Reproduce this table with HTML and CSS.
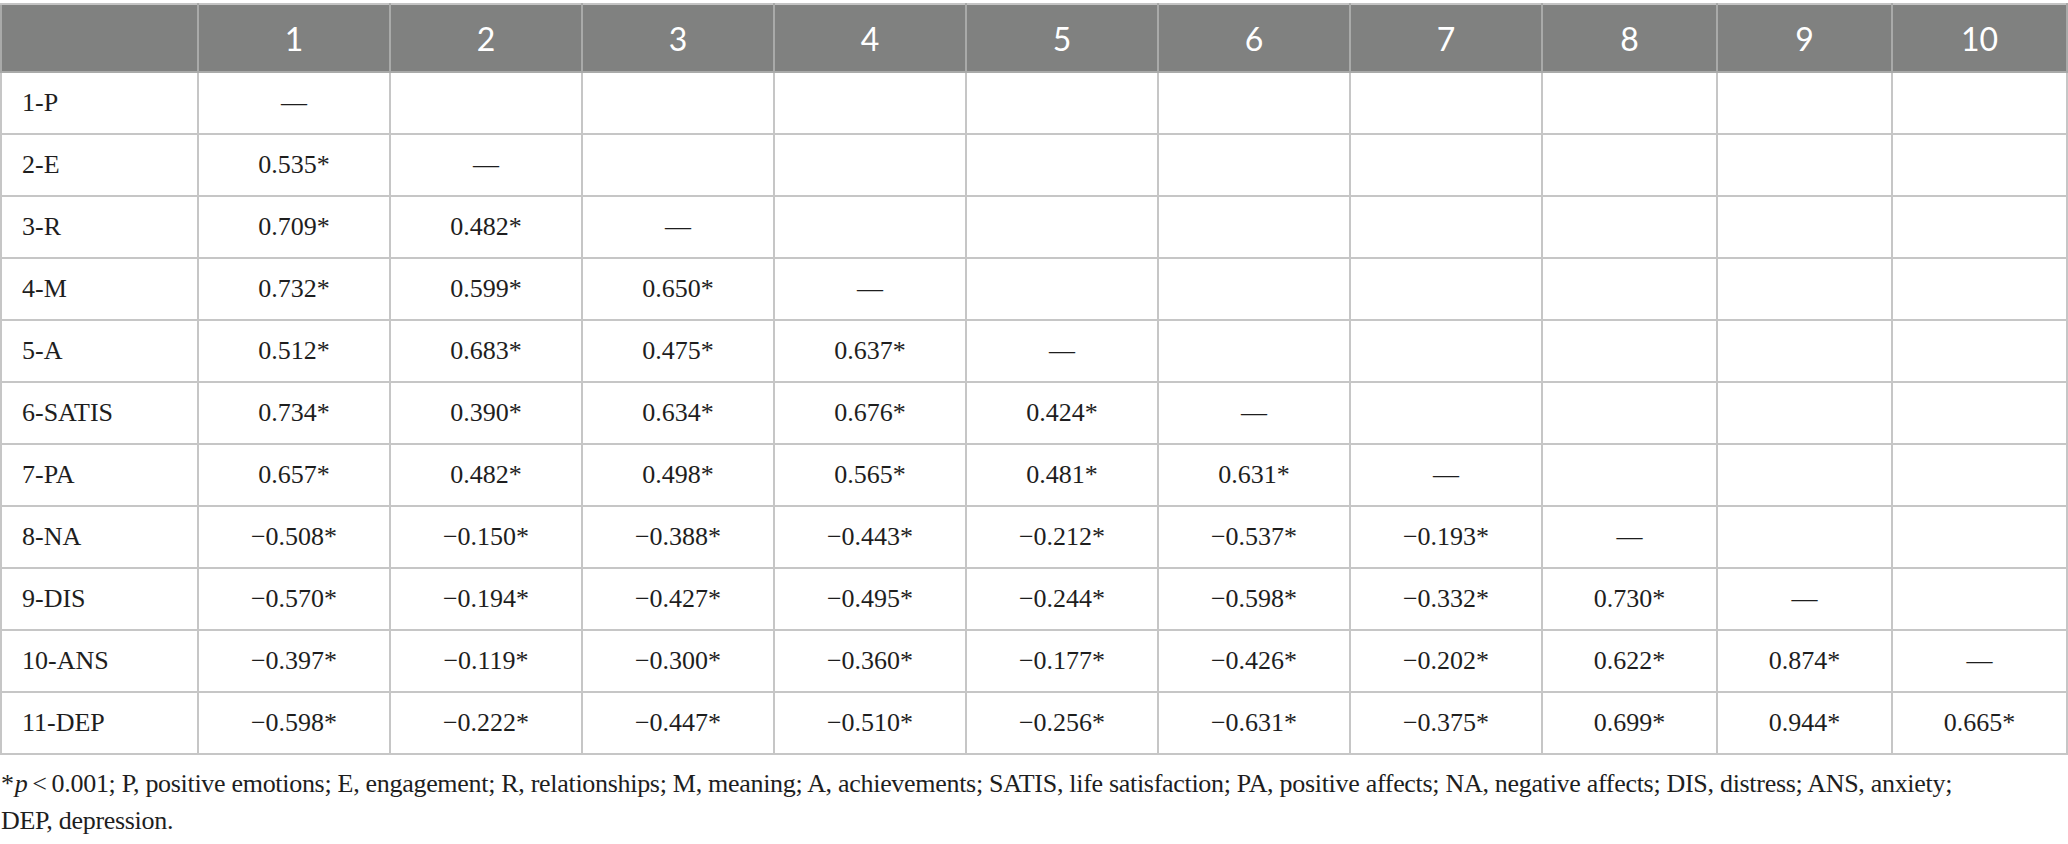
FILE: index.html
```html
<!DOCTYPE html>
<html>
<head>
  <title>Correlations</title>
  <meta name="viewport" content="width=device-width, initial-scale=1.0">
  <link rel="stylesheet" href="styles.css">
</head>
<body>
  <div class="wrap">
    <table class="corr">
      <colgroup>
        <col class="c-label">
        <col class="c-wide"><col class="c-wide"><col class="c-wide"><col class="c-wide">
        <col class="c-wide"><col class="c-wide"><col class="c-wide">
        <col class="c-narrow"><col class="c-narrow"><col class="c-narrow">
      </colgroup>
      <thead>
        <tr>
          <th></th>
          <th>1</th><th>2</th><th>3</th><th>4</th><th>5</th>
          <th>6</th><th>7</th><th>8</th><th>9</th><th>10</th>
        </tr>
      </thead>
      <tbody>
        <tr><td>1-P</td><td>—</td><td></td><td></td><td></td><td></td><td></td><td></td><td></td><td></td><td></td></tr>
        <tr><td>2-E</td><td>0.535*</td><td>—</td><td></td><td></td><td></td><td></td><td></td><td></td><td></td><td></td></tr>
        <tr><td>3-R</td><td>0.709*</td><td>0.482*</td><td>—</td><td></td><td></td><td></td><td></td><td></td><td></td><td></td></tr>
        <tr><td>4-M</td><td>0.732*</td><td>0.599*</td><td>0.650*</td><td>—</td><td></td><td></td><td></td><td></td><td></td><td></td></tr>
        <tr><td>5-A</td><td>0.512*</td><td>0.683*</td><td>0.475*</td><td>0.637*</td><td>—</td><td></td><td></td><td></td><td></td><td></td></tr>
        <tr><td>6-SATIS</td><td>0.734*</td><td>0.390*</td><td>0.634*</td><td>0.676*</td><td>0.424*</td><td>—</td><td></td><td></td><td></td><td></td></tr>
        <tr><td>7-PA</td><td>0.657*</td><td>0.482*</td><td>0.498*</td><td>0.565*</td><td>0.481*</td><td>0.631*</td><td>—</td><td></td><td></td><td></td></tr>
        <tr><td>8-NA</td><td>−0.508*</td><td>−0.150*</td><td>−0.388*</td><td>−0.443*</td><td>−0.212*</td><td>−0.537*</td><td>−0.193*</td><td>—</td><td></td><td></td></tr>
        <tr><td>9-DIS</td><td>−0.570*</td><td>−0.194*</td><td>−0.427*</td><td>−0.495*</td><td>−0.244*</td><td>−0.598*</td><td>−0.332*</td><td>0.730*</td><td>—</td><td></td></tr>
        <tr><td>10-ANS</td><td>−0.397*</td><td>−0.119*</td><td>−0.300*</td><td>−0.360*</td><td>−0.177*</td><td>−0.426*</td><td>−0.202*</td><td>0.622*</td><td>0.874*</td><td>—</td></tr>
        <tr><td>11-DEP</td><td>−0.598*</td><td>−0.222*</td><td>−0.447*</td><td>−0.510*</td><td>−0.256*</td><td>−0.631*</td><td>−0.375*</td><td>0.699*</td><td>0.944*</td><td>0.665*</td></tr>
      </tbody>
    </table>
    <p class="note"><span class="star">*</span><i>p</i>&#8201;&lt;&#8201;0.001; P, positive emotions; E, engagement; R, relationships; M, meaning; A, achievements; SATIS, life satisfaction; PA, positive affects; NA, negative affects; DIS, distress; ANS, anxiety; DEP, depression.</p>
  </div>
</body>
</html>
```

FILE: styles.css
```css
body {
  margin: 0;
  background-color: #ffffff;
  color: #1e1e1e;
  font-family: "Liberation Serif", "Times New Roman", serif;
}

.wrap {
  padding-top: 3px;
  width: 2067px;
}

.corr {
  width: 2067px;
  border-collapse: collapse;
  table-layout: fixed;
  font-size: 26px;
}

.c-label {
  width: 197px;
}

.c-wide {
  width: 192px;
}

.c-narrow {
  width: 175px;
}

.corr th {
  height: 66px;
  padding: 0;
  background-color: #808180;
  color: #ffffff;
  font-family: Lato, "Open Sans", sans-serif;
  font-weight: 400;
  font-size: 32px;
  text-align: center;
  vertical-align: middle;
  border: 2px solid #a9aaa9;
  border-top-color: #c4c4c4;
}

.corr td {
  height: 60px;
  padding: 0;
  text-align: center;
  vertical-align: middle;
  border: 2px solid #c6c6c6;
}

.corr td:first-child {
  text-align: left;
  padding-left: 20px;
}

.note {
  margin: 10px 0 0 1px;
  font-size: 26px;
  letter-spacing: -0.3px;
  line-height: 37px;
  width: 1960px;
}

.star {
  margin-right: 1px;
}
```
